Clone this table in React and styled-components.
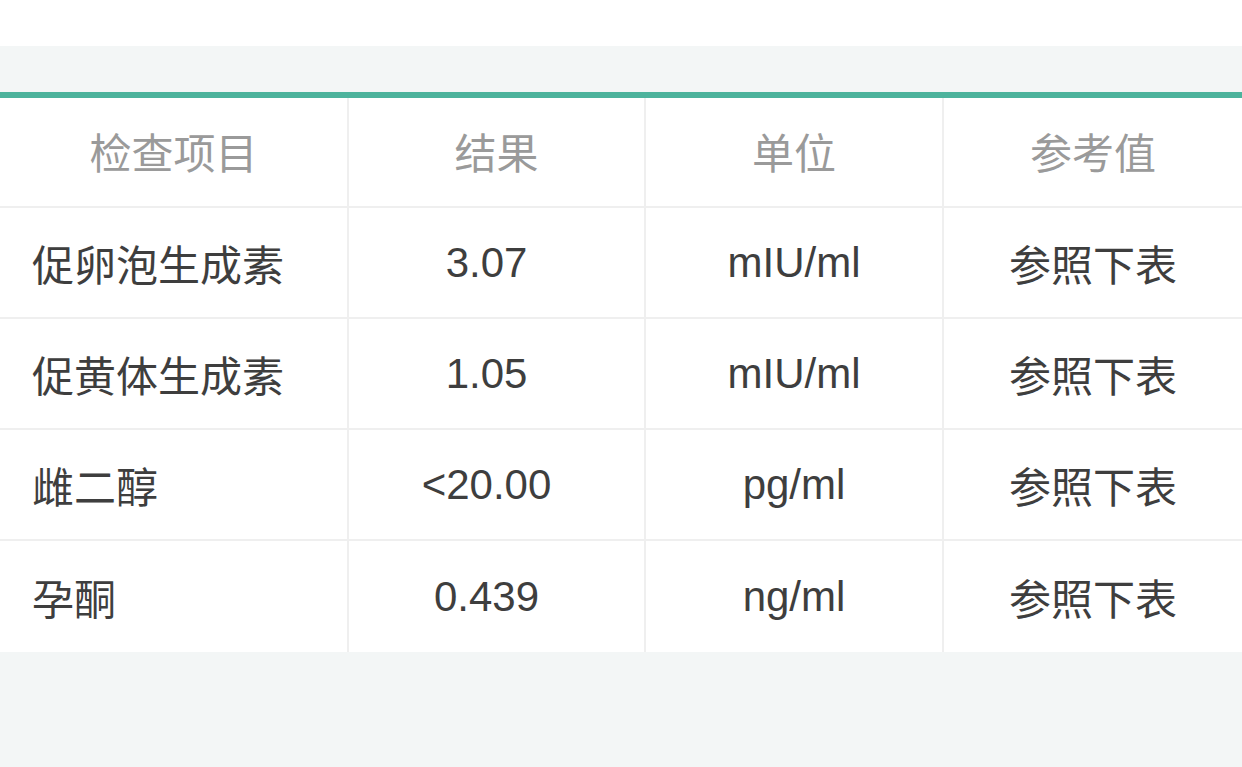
import React from 'react';
import styled, { createGlobalStyle } from 'styled-components';

const GlobalStyle = createGlobalStyle`
  html, body {
    margin: 0;
    padding: 0;
    background: #f3f6f6;
  }
  body {
    font-family: "Liberation Sans", "Noto Sans CJK SC", sans-serif;
  }
`;

const rows = [
  { name: '促卵泡生成素', result: '3.07', unit: 'mIU/ml', ref: '参照下表' },
  { name: '促黄体生成素', result: '1.05', unit: 'mIU/ml', ref: '参照下表' },
  { name: '雌二醇', result: '<20.00', unit: 'pg/ml', ref: '参照下表' },
  { name: '孕酮', result: '0.439', unit: 'ng/ml', ref: '参照下表' },
];

const Page = styled.div`
  width: 1242px;
  height: 767px;
  display: flex;
  flex-direction: column;
  background: #f3f6f6;
`;

const TopBar = styled.div`
  height: 46px;
  background: #ffffff;
`;

const Spacer = styled.div`
  height: 46px;
  background: #f3f6f6;
`;

const Table = styled.div`
  border-top: 6px solid #4cb39c;
  background: #ffffff;
  display: grid;
  grid-template-columns: 349px 297px 298px 1fr;
`;

const Cell = styled.div`
  display: flex;
  align-items: center;
  justify-content: ${(p) => (p.$left ? 'flex-start' : 'center')};
  padding-left: ${(p) => (p.$left ? '32px' : '0')};
  padding-right: ${(p) => (p.$shift ? '20px' : '0')};
  padding-bottom: ${(p) => (p.$head ? '4px' : '0')};
  font-size: 42px;
  color: ${(p) => (p.$head ? '#9a9a9a' : '#3e3e3e')};
  border-right: ${(p) => (p.$last ? 'none' : '2px solid #efefef')};
  border-bottom: ${(p) => (p.$bottom ? 'none' : '2px solid #efefef')};
  box-sizing: border-box;
  height: ${(p) => (p.$head ? '110px' : '111px')};
`;

export default function App() {
  return (
    <Page>
      <GlobalStyle />
      <TopBar />
      <Spacer />
      <Table>
        <Cell $head>检查项目</Cell>
        <Cell $head>结果</Cell>
        <Cell $head>单位</Cell>
        <Cell $head $last>参考值</Cell>
        {rows.map((r, i) => {
          const bottom = i === rows.length - 1;
          return (
            <React.Fragment key={r.name}>
              <Cell $left $bottom={bottom}>{r.name}</Cell>
              <Cell $shift $bottom={bottom}>{r.result}</Cell>
              <Cell $bottom={bottom}>{r.unit}</Cell>
              <Cell $last $bottom={bottom}>{r.ref}</Cell>
            </React.Fragment>
          );
        })}
      </Table>
    </Page>
  );
}
